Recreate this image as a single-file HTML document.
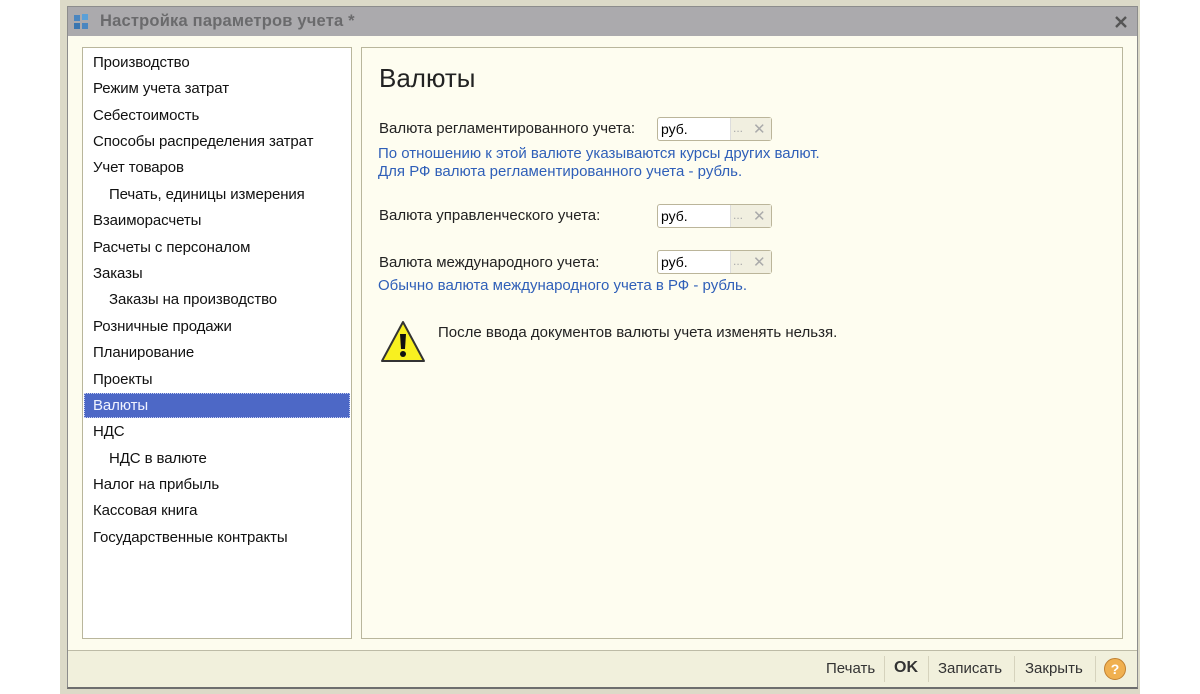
<!DOCTYPE html>
<html><head><meta charset="utf-8"><style>
*{margin:0;padding:0;box-sizing:border-box}
body{width:1200px;height:694px;background:#fff;position:relative;overflow:hidden;font-family:"Liberation Sans",sans-serif}
.abs{position:absolute}
#frame{left:60px;top:0;width:1080px;height:694px;background:#dcdac8}
#win{left:67px;top:6px;width:1071px;height:683px;background:#fdfcee;border:1px solid #8c8c8c;border-bottom:3px solid #6e6e6e}
#title{left:68px;top:7px;width:1069px;height:29px;background:#abaaad}
#title span{position:absolute;left:32px;top:5px;font-size:16.5px;font-weight:bold;color:#6a6a6c;letter-spacing:0.2px}
#list{left:82px;top:47px;width:270px;height:592px;background:#fff;border:1px solid #b9b69c}
.it{position:absolute;left:10px;font-size:15px;color:#111;height:24px;line-height:24px;letter-spacing:-0.1px}
.sub{left:26px}
#sel{left:1px;top:345px;width:266px;height:25px;background:#4d68c6;border:1px dotted #c8d0f0}
#right{left:361px;top:47px;width:762px;height:592px;background:#fefdf0;border:1px solid #b9b69c}
.lbl{position:absolute;font-size:15px;color:#222}
.blue{position:absolute;font-size:15px;color:#2f5fb8;line-height:18px}
.inp{position:absolute;left:657px;width:115px;height:24px;border:1px solid #bbb59a;border-radius:3px;background:#fff}
.inp .t{position:absolute;left:3px;top:3px;font-size:14px;color:#000}
.inp .b{position:absolute;left:72px;top:0;width:41px;height:22px;background:#f1efe0;border-left:1px solid #ddd}
.inp .b span{position:absolute;font-size:12px;color:#aaa}
#foot{left:68px;top:650px;width:1069px;height:37px;background:#f1f0dc;border-top:1px solid #bdbba6}
.fb{position:absolute;top:660px;font-size:15px;color:#333}
.sep{position:absolute;top:656px;width:1px;height:26px;background:#d6d3bd}
</style></head><body>
<div id="frame" class="abs"></div>
<div id="win" class="abs"></div>
<div id="title" class="abs">
<svg style="position:absolute;left:5px;top:6px" width="18" height="18" viewBox="0 0 18 18"><rect x="1" y="2" width="6" height="6" fill="#4a86c0"/><rect x="9" y="1" width="6" height="6" fill="#5aa0d8"/><rect x="1" y="10" width="6" height="6" fill="#3a76b0"/><rect x="9" y="10" width="6" height="6" fill="#4a86c0"/></svg>
<span>Настройка параметров учета *</span>
<svg style="position:absolute;left:1046px;top:8px" width="14" height="14" viewBox="0 0 14 14"><path d="M2 2L12 12M12 2L2 12" stroke="#555" stroke-width="2.4"/></svg>
</div>
<div id="list" class="abs">
<div id="sel" class="abs"></div>
<div class="it" style="top:3px">Производство</div>
<div class="it" style="top:29px">Режим учета затрат</div>
<div class="it" style="top:56px">Себестоимость</div>
<div class="it" style="top:82px">Способы распределения затрат</div>
<div class="it" style="top:108px">Учет товаров</div>
<div class="it sub" style="top:135px">Печать, единицы измерения</div>
<div class="it" style="top:161px">Взаиморасчеты</div>
<div class="it" style="top:188px">Расчеты с персоналом</div>
<div class="it" style="top:214px">Заказы</div>
<div class="it sub" style="top:240px">Заказы на производство</div>
<div class="it" style="top:267px">Розничные продажи</div>
<div class="it" style="top:293px">Планирование</div>
<div class="it" style="top:320px">Проекты</div>
<div class="it" style="top:346px;color:#f0f2ff">Валюты</div>
<div class="it" style="top:372px">НДС</div>
<div class="it sub" style="top:399px">НДС в валюте</div>
<div class="it" style="top:425px">Налог на прибыль</div>
<div class="it" style="top:451px">Кассовая книга</div>
<div class="it" style="top:478px">Государственные контракты</div>
</div>
<div id="right" class="abs"></div>
<div class="abs" style="left:379px;top:63px;font-size:26px;color:#222">Валюты</div>
<div class="lbl" style="left:379px;top:120px">Валюта регламентированного учета:</div>
<div class="blue" style="left:378px;top:145px">По отношению к этой валюте указываются курсы других валют.<br>Для РФ валюта регламентированного учета - рубль.</div>
<div class="lbl" style="left:379px;top:207px">Валюта управленческого учета:</div>
<div class="lbl" style="left:379px;top:254px">Валюта международного учета:</div>
<div class="blue" style="left:378px;top:277px">Обычно валюта международного учета в РФ - рубль.</div>
<div class="inp" style="top:117px"><span class="t">руб.</span><div class="b"><span style="left:2px;top:3px">...</span><span style="left:22px;top:2px;font-size:15px">✕</span></div></div>
<div class="inp" style="top:204px"><span class="t">руб.</span><div class="b"><span style="left:2px;top:3px">...</span><span style="left:22px;top:2px;font-size:15px">✕</span></div></div>
<div class="inp" style="top:250px"><span class="t">руб.</span><div class="b"><span style="left:2px;top:3px">...</span><span style="left:22px;top:2px;font-size:15px">✕</span></div></div>
<svg class="abs" style="left:380px;top:320px" width="46" height="44" viewBox="0 0 46 44"><path d="M23 2L44 41H2Z" fill="#f8f020" stroke="#333" stroke-width="2" stroke-linejoin="round"/><path d="M20 14h6l-1 15h-4z" fill="#111"/><circle cx="23" cy="34" r="3" fill="#111"/></svg>
<div class="lbl" style="left:438px;top:324px">После ввода документов валюты учета изменять нельзя.</div>
<div id="foot" class="abs"></div>
<div class="fb" style="left:826px">Печать</div>
<div class="sep" style="left:884px"></div>
<div class="fb" style="left:894px;font-weight:bold;font-size:16px;top:659px">OK</div>
<div class="sep" style="left:928px"></div>
<div class="fb" style="left:938px">Записать</div>
<div class="sep" style="left:1014px"></div>
<div class="fb" style="left:1025px">Закрыть</div>
<div class="sep" style="left:1095px"></div>
<svg class="abs" style="left:1103px;top:657px" width="24" height="24" viewBox="0 0 24 24"><circle cx="12" cy="12" r="10.5" fill="#f0b050" stroke="#c08030"/><text x="12" y="17" font-size="14" font-family="Liberation Sans" text-anchor="middle" fill="#fff" font-weight="bold">?</text></svg>
</body></html>
